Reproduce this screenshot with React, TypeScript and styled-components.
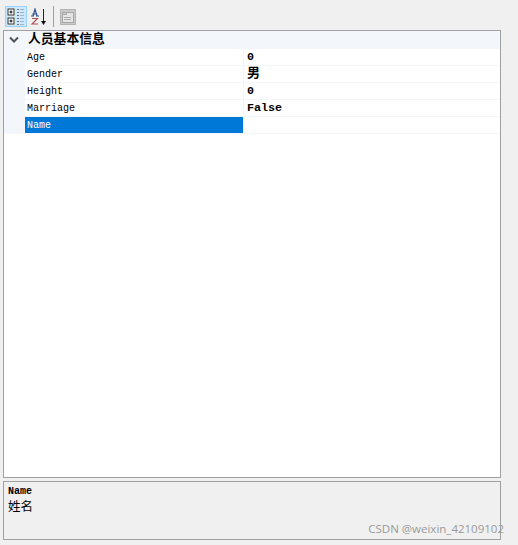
import React from "react";
import styled, { createGlobalStyle } from "styled-components";

const Global = createGlobalStyle`
  html, body {
    margin: 0;
    background: #f0f0f0;
  }
  body {
    width: 518px;
    height: 545px;
    overflow: hidden;
  }
`;

const MONO = `"Liberation Mono", "Noto Sans CJK SC", monospace`;

const Page = styled.div`
  width: 518px;
  height: 545px;
  padding: 6px 17px 5px 3px;
  box-sizing: border-box;
  display: flex;
  flex-direction: column;
  position: relative;
`;

const Toolbar = styled.div`
  height: 24px;
  display: flex;
  align-items: flex-start;
  padding-left: 2px;
`;

const ToolButton = styled.div<{ $active?: boolean }>`
  width: 22px;
  height: 21px;
  box-sizing: border-box;
  display: flex;
  align-items: center;
  justify-content: center;
  border: 1px solid ${(p) => (p.$active ? "#99d1ff" : "transparent")};
  background: ${(p) => (p.$active ? "#cce8ff" : "transparent")};
`;

const ToolSeparator = styled.div`
  width: 1px;
  height: 21px;
  margin: 0 3px 0 4px;
  background: #a0a0a0;
`;

const Grid = styled.div`
  flex: 1;
  background: #fff;
  border: 1px solid #a0a0a0;
`;

const GroupRow = styled.div`
  height: 18px;
  display: flex;
  align-items: center;
  background: #f3f6fb;
`;

const Chevron = styled.div`
  width: 24px;
  display: flex;
  justify-content: center;
  margin-left: -2px;
  margin-right: 2px;
`;

const GroupTitle = styled.span`
  font: bold 12.8px/16px "Noto Sans CJK SC", sans-serif;
  color: #000;
  padding-bottom: 4px;
`;

const Row = styled.div`
  display: flex;
  height: 17px;
`;

const Gutter = styled.div`
  width: 21px;
  background: #f3f6fb;
`;

const Label = styled.div<{ $selected?: boolean }>`
  width: 218px;
  box-sizing: border-box;
  padding: 1px 0 0 2px;
  font: 10px/15px ${MONO};
  color: ${(p) => (p.$selected ? "#fff" : "#000")};
  background: ${(p) => (p.$selected ? "#0078d7" : "transparent")};
  border-bottom: 1px solid #f3f6fb;
`;

const Value = styled.div<{ $cjk?: boolean }>`
  flex: 1;
  box-sizing: border-box;
  padding-left: 3px;
  font: bold ${(p) => (p.$cjk ? "13px" : "11.7px")}/16px ${MONO};
  color: #000;
  border-left: 1px solid #f3f6fb;
  border-bottom: 1px solid #f3f6fb;
`;

const Description = styled.div`
  height: 59px;
  margin-top: 3px;
  box-sizing: border-box;
  border: 1px solid #a0a0a0;
  padding: 4px 4px;
  color: #000;
`;

const DescTitle = styled.div`
  font: bold 10px/12px ${MONO};
`;

const DescText = styled.div`
  font: 12.5px/15px "Noto Sans CJK SC", sans-serif;
`;

const Watermark = styled.div`
  position: absolute;
  right: 14px;
  bottom: 8px;
  font: 11.5px/16px "Open Sans", sans-serif;
  color: #9a9a9a;
`;

const CategorizedIcon = () => (
  <svg width="18" height="18" viewBox="0 0 18 18">
    <rect x="0" y="0" width="8" height="8" fill="#f4eecb" opacity="0.8" />
    <rect x="0" y="9" width="8" height="8" fill="#f4eecb" opacity="0.8" />
    <rect x="1" y="1" width="6" height="6" fill="#fff" stroke="#26323e" />
    <path d="M2.5 4h3M4 2.5v3" stroke="#000" />
    <rect x="1" y="10" width="6" height="6" fill="#fff" stroke="#26323e" />
    <path d="M2.5 13h3M4 11.5v3" stroke="#000" />
    <path d="M10 1.5h2M10 4.5h2M10 7.5h2M10 10.5h2M10 13.5h2M10 16.5h2" stroke="#6a7682" />
    <path d="M13 1.5h4M13 4.5h4M13 7.5h4M13 10.5h4M13 13.5h4M13 16.5h4" stroke="#a8b2bc" />
  </svg>
);

const SortIcon = () => (
  <svg width="20" height="18" viewBox="0 0 20 18">
    <path
      d="M3 8h3M8 8h3M4.3 6h5M5 8 L7 1 L9 8"
      fill="none"
      stroke="#2b4f8f"
      strokeWidth="1.1"
    />
    <path d="M4 10.5h5.5L4 16h6" fill="none" stroke="#a8504e" strokeWidth="1.1" />
    <path d="M15.5 1v14" stroke="#222" strokeWidth="1" />
    <path d="M13 13h5L15.5 17z" fill="#111" />
  </svg>
);

const PagesIcon = () => (
  <svg width="16" height="16" viewBox="0 0 16 16">
    <rect x="0" y="0" width="16" height="16" fill="#c9c9c9" />
    <rect x="0.5" y="0.5" width="15" height="15" fill="none" stroke="#b4b4b4" />
    <rect x="2.5" y="3.5" width="11" height="10" fill="#e4e4e4" stroke="#a8a8a8" />
    <path d="M2.5 3.5h4v2h-4z" fill="#d0d0d0" stroke="#a8a8a8" />
    <path d="M4 8.5h7M4 10.5h7" stroke="#adadad" />
  </svg>
);

const ChevronIcon = () => (
  <svg width="10" height="8" viewBox="0 0 10 8">
    <path d="M1 1.5 L5 5.5 L9 1.5" fill="none" stroke="#4a5560" strokeWidth="2" />
  </svg>
);

const rows = [
  { name: "Age", value: "0" },
  { name: "Gender", value: "男", cjk: true },
  { name: "Height", value: "0" },
  { name: "Marriage", value: "False" },
  { name: "Name", value: "", selected: true },
];

export default function App() {
  return (
    <Page>
      <Global />
      <Toolbar>
        <ToolButton $active>
          <CategorizedIcon />
        </ToolButton>
        <ToolButton>
          <SortIcon />
        </ToolButton>
        <ToolSeparator />
        <ToolButton>
          <PagesIcon />
        </ToolButton>
      </Toolbar>
      <Grid>
        <GroupRow>
          <Chevron>
            <ChevronIcon />
          </Chevron>
          <GroupTitle>人员基本信息</GroupTitle>
        </GroupRow>
        {rows.map((r) => (
          <Row key={r.name}>
            <Gutter />
            <Label $selected={r.selected}>{r.name}</Label>
            <Value $cjk={r.cjk}>{r.value}</Value>
          </Row>
        ))}
      </Grid>
      <Description>
        <DescTitle>Name</DescTitle>
        <DescText>姓名</DescText>
      </Description>
      <Watermark>CSDN @weixin_42109102</Watermark>
    </Page>
  );
}
